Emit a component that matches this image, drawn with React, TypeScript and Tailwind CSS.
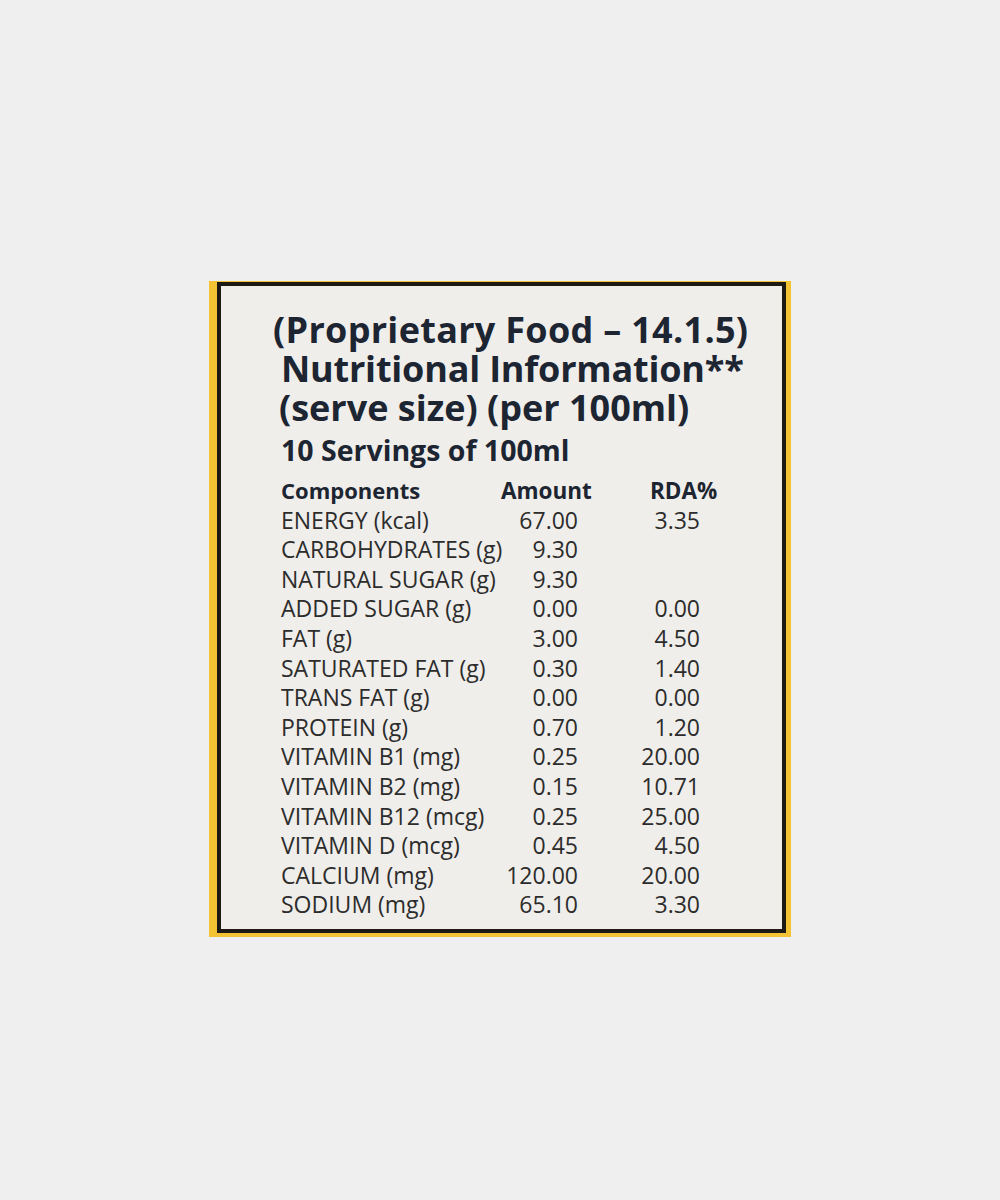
const rows: [string, string, string][] = [
  ["ENERGY (kcal)", "67.00", "3.35"],
  ["CARBOHYDRATES (g)", "9.30", ""],
  ["NATURAL SUGAR (g)", "9.30", ""],
  ["ADDED SUGAR (g)", "0.00", "0.00"],
  ["FAT (g)", "3.00", "4.50"],
  ["SATURATED FAT (g)", "0.30", "1.40"],
  ["TRANS FAT (g)", "0.00", "0.00"],
  ["PROTEIN (g)", "0.70", "1.20"],
  ["VITAMIN B1 (mg)", "0.25", "20.00"],
  ["VITAMIN B2 (mg)", "0.15", "10.71"],
  ["VITAMIN B12 (mcg)", "0.25", "25.00"],
  ["VITAMIN D (mcg)", "0.45", "4.50"],
  ["CALCIUM (mg)", "120.00", "20.00"],
  ["SODIUM (mg)", "65.10", "3.30"],
]

export default function App() {
  return (
    <div className="min-h-[1200px] bg-[#efefef] pt-[281px] font-['Open_Sans',sans-serif]">
      <div className="mx-auto w-[582px] bg-[#f3c333] pl-[8px] pr-[5px] pt-[1px] pb-[4px]">
        <div className="h-[651px] border-4 border-[#1d1914] bg-[#f0eeea] pl-[60px] pt-[24px]">
          <div className="text-[36px] font-bold leading-[39px] text-[#1c2531]">
            <p className="-ml-[8px] whitespace-nowrap tracking-[0.3px]">(Proprietary Food – 14.1.5)</p>
            <p className="whitespace-nowrap tracking-[-0.2px]">Nutritional Information**</p>
            <p className="-ml-[2px] whitespace-nowrap">(serve size) (per 100ml)</p>
          </div>
          <p className="mt-[6px] text-[28.5px] font-bold leading-[34px] text-[#1c2531]">10 Servings of 100ml</p>

          <div className="mt-[9px] grid grid-cols-[220px_77px_122px] text-[23px] leading-[29.6px] text-[#2c2c2c]">
            <span className="text-[22px] font-bold text-[#1c2531]">Components</span>
            <span className="whitespace-nowrap text-[22.5px] font-bold text-[#1c2531]">Amount</span>
            <span className="pl-[72px] text-[22.5px] font-bold text-[#1c2531]">RDA%</span>
            {rows.map(([label, amount, rda]) => (
              <div key={label} className="contents">
                <span className="whitespace-nowrap">{label}</span>
                <span className="text-right">{amount}</span>
                <span className="text-right">{rda}</span>
              </div>
            ))}
          </div>
        </div>
      </div>
    </div>
  )
}
